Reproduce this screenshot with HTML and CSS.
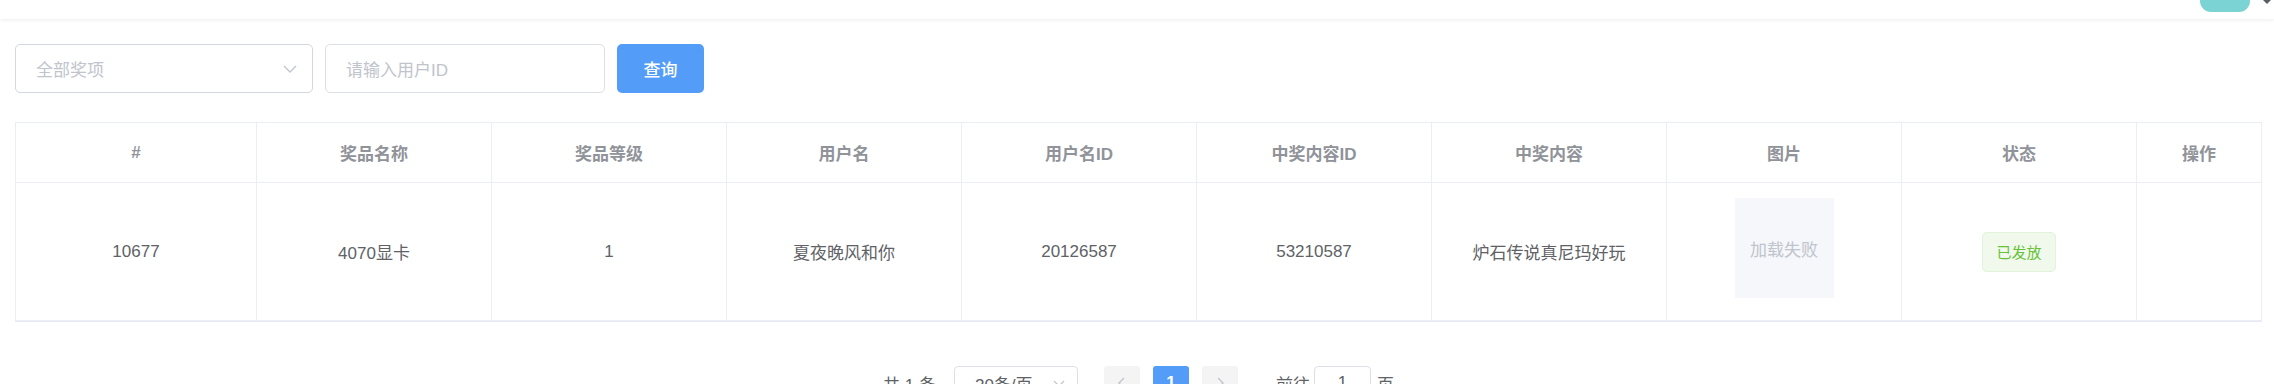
FILE: index.html
```html
<!DOCTYPE html>
<html lang="zh-CN">
<head>
<meta charset="utf-8">
<title>中奖记录</title>
<link rel="stylesheet" href="styles.css">
</head>
<body>
<div class="navbar">
  <div class="avatar"></div>
  <div class="caret"></div>
</div>
<main class="app">
  <div class="filter">
    <div class="select">
      <span class="ph">全部奖项</span>
      <svg class="chev" width="14" height="8" viewBox="0 0 14 8"><path d="M1 1 L7 7 L13 1" fill="none" stroke="#c0c4cc" stroke-width="1.3"/></svg>
    </div>
    <div class="input"><span class="ph">请输入用户ID</span></div>
    <button class="btn">查询</button>
  </div>

  <div class="table">
    <div class="th">#</div>
    <div class="th">奖品名称</div>
    <div class="th">奖品等级</div>
    <div class="th">用户名</div>
    <div class="th">用户名ID</div>
    <div class="th">中奖内容ID</div>
    <div class="th">中奖内容</div>
    <div class="th">图片</div>
    <div class="th">状态</div>
    <div class="th last">操作</div>

    <div class="td">10677</div>
    <div class="td">4070显卡</div>
    <div class="td">1</div>
    <div class="td">夏夜晚风和你</div>
    <div class="td">20126587</div>
    <div class="td">53210587</div>
    <div class="td">炉石传说真尼玛好玩</div>
    <div class="td"><div class="img-fail">加载失败</div></div>
    <div class="td"><span class="tag">已发放</span></div>
    <div class="td last"></div>
  </div>

  <div class="pager">
    <span class="total">共 1 条</span>
    <div class="size">
      <span>20条/页</span>
      <svg class="chev-s" width="12" height="7" viewBox="0 0 12 7"><path d="M1 1 L6 6 L11 1" fill="none" stroke="#c0c4cc" stroke-width="1.2"/></svg>
    </div>
    <div class="pbtn"><svg width="10" height="12" viewBox="0 0 10 12"><path d="M7 1 L2 6 L7 11" fill="none" stroke="#c0c4cc" stroke-width="1.4"/></svg></div>
    <div class="pnum active">1</div>
    <div class="pbtn"><svg width="10" height="12" viewBox="0 0 10 12"><path d="M3 1 L8 6 L3 11" fill="none" stroke="#c0c4cc" stroke-width="1.4"/></svg></div>
    <span class="goto">前往</span>
    <div class="jump">1</div>
    <span class="page">页</span>
  </div>
</main>
</body>
</html>
```

FILE: styles.css
```css
* { box-sizing: border-box; }

html, body {
  margin: 0;
  background: #fff;
  font-family: "Liberation Sans", "Noto Sans CJK SC", sans-serif;
  color: #606266;
  overflow: hidden;
}

.navbar {
  height: 19px;
  background: #fff;
  box-shadow: 0 1px 4px rgba(0, 21, 41, 0.08);
  display: flex;
  justify-content: flex-end;
  align-items: flex-start;
  padding-right: 3px;
  position: relative;
  z-index: 1;
}

.avatar {
  width: 50px;
  height: 12px;
  background: #7bd3d4;
  border-radius: 0 0 11px 11px;
  margin-right: 13px;
}

.caret {
  width: 0;
  height: 0;
  border-left: 4px solid transparent;
  border-right: 4px solid transparent;
  border-top: 4px solid #5a5e66;
}

.app {
  padding: 25px 12px 0 15px;
}

.filter {
  display: flex;
  align-items: center;
  gap: 12px;
  height: 49px;
}

.select, .input {
  height: 49px;
  border: 1px solid #dcdfe6;
  border-radius: 5px;
  display: flex;
  align-items: center;
  padding-left: 20px;
  font-size: 17px;
}

.select {
  width: 298px;
  justify-content: space-between;
  padding-right: 15px;
  border-color: #d4d7de;
}

.input {
  width: 280px;
}

.ph {
  color: #c0c4cc;
}

.btn {
  width: 87px;
  height: 49px;
  border: none;
  border-radius: 5px;
  background: #539cf8;
  color: #fff;
  font-family: inherit;
  font-size: 17px;
  font-weight: 500;
}

.table {
  margin-top: 29px;
  display: grid;
  grid-template-columns: 241px repeat(8, 235px) 1fr;
  border: 1px solid #ebeef5;
  border-bottom-color: #e8eaf2;
}

.th, .td {
  border-right: 1px solid #ebeef5;
  border-bottom: 1px solid #ebeef5;
  display: flex;
  align-items: center;
  justify-content: center;
  font-size: 17px;
}

.th.last, .td.last {
  border-right: none;
}

.th {
  height: 60px;
  color: #909399;
  font-weight: bold;
}

.td {
  height: 138px;
  color: #606266;
}

.img-fail {
  width: 99px;
  height: 100px;
  background: #f5f7fa;
  color: #c0c4cc;
  display: flex;
  align-items: center;
  justify-content: center;
  font-size: 17px;
  margin-bottom: 7px;
}

.tag {
  height: 40px;
  padding: 0 13px;
  display: inline-flex;
  align-items: center;
  font-size: 15px;
  color: #67c23a;
  background: #f0f9eb;
  border: 1px solid #e1f3d8;
  border-radius: 5px;
}

.pager {
  margin-top: 44px;
  display: flex;
  justify-content: center;
  align-items: center;
  height: 34px;
  font-size: 17px;
  color: #606266;
}

.total {
  margin-right: 18px;
}

.size {
  width: 124px;
  height: 34px;
  border: 1px solid #dcdfe6;
  border-radius: 4px;
  display: flex;
  align-items: center;
  justify-content: space-between;
  padding: 0 12px 0 20px;
  margin-right: 26px;
}

.pbtn, .pnum {
  width: 36px;
  height: 34px;
  border-radius: 3px;
  background: #f4f4f5;
  display: flex;
  align-items: center;
  justify-content: center;
}

.pnum {
  margin: 0 13px;
}

.pnum.active {
  background: #539cf8;
  color: #fff;
  font-weight: bold;
}

.goto {
  margin-left: 38px;
  margin-right: 4px;
}

.jump {
  width: 57px;
  height: 34px;
  border: 1px solid #dcdfe6;
  border-radius: 4px;
  display: flex;
  align-items: center;
  justify-content: center;
  margin-right: 6px;
}
```
